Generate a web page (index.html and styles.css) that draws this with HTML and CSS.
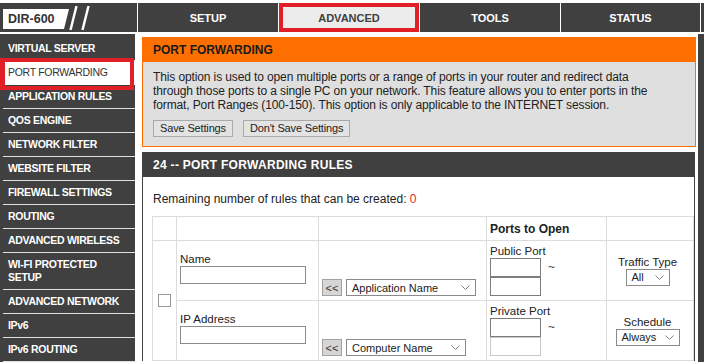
FILE: index.html
```html
<!DOCTYPE html>
<html>
<head>
<meta charset="utf-8">
<title>DIR-600 Port Forwarding</title>
<link rel="stylesheet" href="styles.css">
</head>
<body>
<div class="page">
  <header class="topbar">
    <div class="brand">
      <div class="logo">DIR-600</div>
      <svg class="slashes" width="22" height="24" viewBox="0 0 22 24">
        <line x1="7.5" y1="0" x2="1.5" y2="24" stroke="#fff" stroke-width="2.4"/>
        <line x1="19.5" y1="0" x2="13.5" y2="24" stroke="#fff" stroke-width="2.4"/>
      </svg>
    </div>
    <nav class="tabs">
      <div class="tab">SETUP</div>
      <div class="tab active">ADVANCED</div>
      <div class="tab">TOOLS</div>
      <div class="tab">STATUS</div>
    </nav>
  </header>

  <div class="main">
    <ul class="sidebar">
      <li class="nav-item">VIRTUAL SERVER</li>
      <li class="nav-item active">PORT FORWARDING</li>
      <li class="nav-item">APPLICATION RULES</li>
      <li class="nav-item">QOS ENGINE</li>
      <li class="nav-item">NETWORK FILTER</li>
      <li class="nav-item">WEBSITE FILTER</li>
      <li class="nav-item">FIREWALL SETTINGS</li>
      <li class="nav-item">ROUTING</li>
      <li class="nav-item">ADVANCED WIRELESS</li>
      <li class="nav-item">WI-FI PROTECTED<br>SETUP</li>
      <li class="nav-item">ADVANCED NETWORK</li>
      <li class="nav-item">IPv6</li>
      <li class="nav-item">IPv6 ROUTING</li>
    </ul>

    <div class="content">
      <section class="box-orange">
        <h2>PORT FORWARDING</h2>
        <div class="box-orange-body">
          <p>This option is used to open multiple ports or a range of ports in your router and redirect data<br>through those ports to a single PC on your network. This feature allows you to enter ports in the<br>format, Port Ranges (100-150). This option is only applicable to the INTERNET session.</p>
          <div class="actions">
            <button class="btn">Save Settings</button>
            <button class="btn">Don't Save Settings</button>
          </div>
        </div>
      </section>

      <section class="box-dark">
        <h2>24 -- PORT FORWARDING RULES</h2>
        <div class="box-dark-body">
          <p class="remaining">Remaining number of rules that can be created: <span class="zero">0</span></p>
          <table class="rules">
            <colgroup>
              <col class="c1"><col class="c2"><col class="c3"><col class="c4"><col class="c5">
            </colgroup>
            <tr class="head">
              <td></td><td></td><td></td><td class="ports-head">Ports to Open</td><td></td>
            </tr>
            <tr class="row">
              <td rowspan="2" class="chk"><input type="checkbox"></td>
              <td class="name-cell">
                <div class="lbl">Name</div>
                <input type="text" class="text-in">
              </td>
              <td class="pick-cell">
                <div class="pick">
                  <span class="arrow-btn">&lt;&lt;</span>
                  <span class="select w-app">Application Name<svg width="9" height="5" viewBox="0 0 9 5"><polyline points="0.5,0.5 4.5,4.5 8.5,0.5" fill="none" stroke="#808080" stroke-width="1"/></svg></span>
                </div>
              </td>
              <td class="ports-cell">
                <div class="lbl">Public Port</div>
                <div class="port-range">
                  <div class="port-inputs"><input type="text" class="port"><input type="text" class="port"></div>
                  <span class="tilde">~</span>
                </div>
              </td>
              <td class="opt-cell">
                <div class="lbl">Traffic Type</div>
                <span class="select w-all">All<svg width="9" height="5" viewBox="0 0 9 5"><polyline points="0.5,0.5 4.5,4.5 8.5,0.5" fill="none" stroke="#808080" stroke-width="1"/></svg></span>
              </td>
            </tr>
            <tr class="row">
              <td class="name-cell">
                <div class="lbl">IP Address</div>
                <input type="text" class="text-in">
              </td>
              <td class="pick-cell">
                <div class="pick">
                  <span class="arrow-btn">&lt;&lt;</span>
                  <span class="select w-comp">Computer Name<svg width="9" height="5" viewBox="0 0 9 5"><polyline points="0.5,0.5 4.5,4.5 8.5,0.5" fill="none" stroke="#808080" stroke-width="1"/></svg></span>
                </div>
              </td>
              <td class="ports-cell">
                <div class="lbl">Private Port</div>
                <div class="port-range">
                  <div class="port-inputs"><input type="text" class="port"><input type="text" class="port dim"></div>
                  <span class="tilde">~</span>
                </div>
              </td>
              <td class="opt-cell">
                <div class="lbl">Schedule</div>
                <span class="select w-always">Always<svg width="9" height="5" viewBox="0 0 9 5"><polyline points="0.5,0.5 4.5,4.5 8.5,0.5" fill="none" stroke="#808080" stroke-width="1"/></svg></span>
              </td>
            </tr>
          </table>
        </div>
      </section>
    </div>

    <div class="help"></div>
  </div>
</div>
</body>
</html>
```

FILE: styles.css
```css
* { box-sizing: border-box; }

html, body {
  margin: 0;
  padding: 0;
  background: #fff;
}

body {
  width: 704px;
  height: 362px;
  overflow: hidden;
  font-family: "Liberation Sans", Arial, sans-serif;
  font-size: 12px;
  color: #222;
}

.page { padding-top: 3px; }

/* ---------- top bar ---------- */
.topbar {
  display: flex;
  height: 29px;
  background: #404040;
}

.brand {
  width: 137px;
  flex-shrink: 0;
  display: flex;
  align-items: flex-start;
}

.logo {
  flex-shrink: 0;
  margin: 6px 0 0 3px;
  width: 66px;
  height: 20px;
  padding-left: 5px;
  background: #fff;
  clip-path: polygon(0 0, 100% 0, calc(100% - 5px) 100%, 0 100%);
  color: #333;
  font-weight: bold;
  font-size: 12.5px;
  line-height: 20px;
}

.slashes { flex-shrink: 0; margin-top: 3px; }

.tabs { display: flex; }

.tab {
  width: 141px;
  border-left: 1px solid #fff;
  color: #fff;
  font-weight: bold;
  font-size: 11px;
  display: flex;
  align-items: center;
  justify-content: center;
}

.tab:last-child {
  border-right: 1px solid #fff;
}

.tab.active {
  background: #ececec;
  color: #404040;
  box-shadow: inset 0 0 0 4px #e11f26;
}

/* ---------- main ---------- */
.main {
  display: flex;
  margin-top: 2px;
  min-height: 330px;
}

.sidebar {
  width: 135px;
  flex-shrink: 0;
  margin: 0;
  padding: 3px 0 0 3px;
  list-style: none;
  background: #404040;
}

.nav-item {
  padding: 5px 0 5px 5px;
  line-height: 13px;
  border-bottom: 1px solid #dedede;
  color: #fff;
  font-weight: bold;
  font-size: 10.5px;
  letter-spacing: -0.3px;
}

.nav-item.active {
  position: relative;
  background: #fff;
  color: #333;
  font-weight: normal;
  letter-spacing: -0.3px;
  border-bottom-color: #fff;
}

.nav-item.active::after {
  content: "";
  position: absolute;
  left: -3px;
  right: 1px;
  top: -3px;
  bottom: -6px;
  border: 4px solid #e11f26;
  border-left-width: 5px;
}

.content {
  flex: 1;
  padding: 3px 2px 0 7px;
}

.help {
  width: 6px;
  flex-shrink: 0;
  background: #404040;
}

/* ---------- orange box ---------- */
.box-orange {
  border: 1px solid #ff6f00;
  background: #dfdfdf;
}

.box-orange h2 {
  margin: 0;
  height: 24px;
  line-height: 24px;
  padding-left: 10px;
  background: #ff6f00;
  color: #1a1a1a;
  font-size: 12px;
}

.box-orange-body {
  padding: 8px 10px 9px;
}

.box-orange-body p {
  margin: 0;
  line-height: 14px;
  letter-spacing: -0.12px;
}

.actions {
  display: flex;
  gap: 10px;
  margin-top: 8px;
}

.btn {
  height: 17px;
  padding: 0 6px;
  border: 1px solid #a9a9a9;
  border-radius: 0;
  background: #e3e3e3;
  color: #222;
  font-family: inherit;
  font-size: 11px;
  letter-spacing: -0.15px;
  line-height: 15px;
}

/* ---------- dark box ---------- */
.box-dark {
  margin: 5px 1px 0 0;
  border: 1px solid #404040;
  border-bottom: none;
  background: #fff;
}

.box-dark h2 {
  margin: 0;
  height: 24px;
  line-height: 24px;
  padding-left: 10px;
  background: #404040;
  color: #fff;
  font-size: 12px;
  letter-spacing: 0.3px;
}

.box-dark-body {
  padding: 15px 0 0 10px;
}

.remaining {
  margin: 0;
  line-height: 14px;
}

.zero { color: #e0262b; }

.rules {
  margin: 10px 0 0 -1px;
  width: 541px;
  border-collapse: collapse;
  table-layout: fixed;
  border: 1px solid #dcdcdc;
}

.rules td {
  border: 1px solid #dcdcdc;
  padding: 0 3px;
  vertical-align: middle;
}

.c1 { width: 24px; }
.c2 { width: 142px; }
.c3 { width: 168px; }
.c4 { width: 120px; }
.c5 { width: 87px; }

.head { height: 24px; }
.row { height: 60px; }

.ports-head {
  font-weight: bold;
  font-size: 12px;
}

.chk { padding: 0; }

.chk input {
  appearance: none;
  -webkit-appearance: none;
  display: block;
  width: 13px;
  height: 13px;
  margin: 0 auto;
  border: 1px solid #9a9a9a;
  background: #fff;
}

.lbl {
  font-size: 11.5px;
  line-height: 14px;
}

.name-cell { padding-bottom: 5px !important; }

.text-in {
  display: block;
  width: 126px;
  height: 18px;
  margin: 0;
  padding: 0;
  border: 1px solid #8c8c8c;
  background: #fff;
}

.pick-cell {
  vertical-align: bottom !important;
  padding-bottom: 4px !important;
}

.pick {
  display: flex;
  align-items: center;
  gap: 4px;
}

.arrow-btn {
  width: 20px;
  height: 17px;
  display: inline-flex;
  align-items: center;
  justify-content: center;
  border: 1px solid #a0a0a0;
  background: #d6d6d6;
  color: #333;
  font-size: 11px;
}

.select {
  display: inline-flex;
  align-items: center;
  justify-content: space-between;
  height: 17px;
  padding: 0 5px 0 5px;
  border: 1px solid #8a8a8a;
  background: #fff;
  color: #222;
  font-size: 11px;
  text-align: left;
}

.w-app { width: 130px; }
.w-comp { width: 120px; }
.w-all { width: 44px; }
.w-always { width: 64px; }

.ports-cell {
  vertical-align: top !important;
  padding-top: 3px !important;
}

.port-range {
  display: flex;
  align-items: flex-start;
}

.port-inputs {
  display: flex;
  flex-direction: column;
}

.port {
  width: 51px;
  height: 19px;
  margin: 0;
  padding: 0;
  border: 1px solid #7c7c7c;
  background: #fff;
}

.port.dim { border-color: #c9c9c9; }

.tilde {
  margin-left: 7px;
  line-height: 19px;
  color: #444;
  font-size: 12px;
}

.opt-cell {
  text-align: center;
  padding-right: 8px !important;
}

.opt-cell .lbl { line-height: 13px; }
```
